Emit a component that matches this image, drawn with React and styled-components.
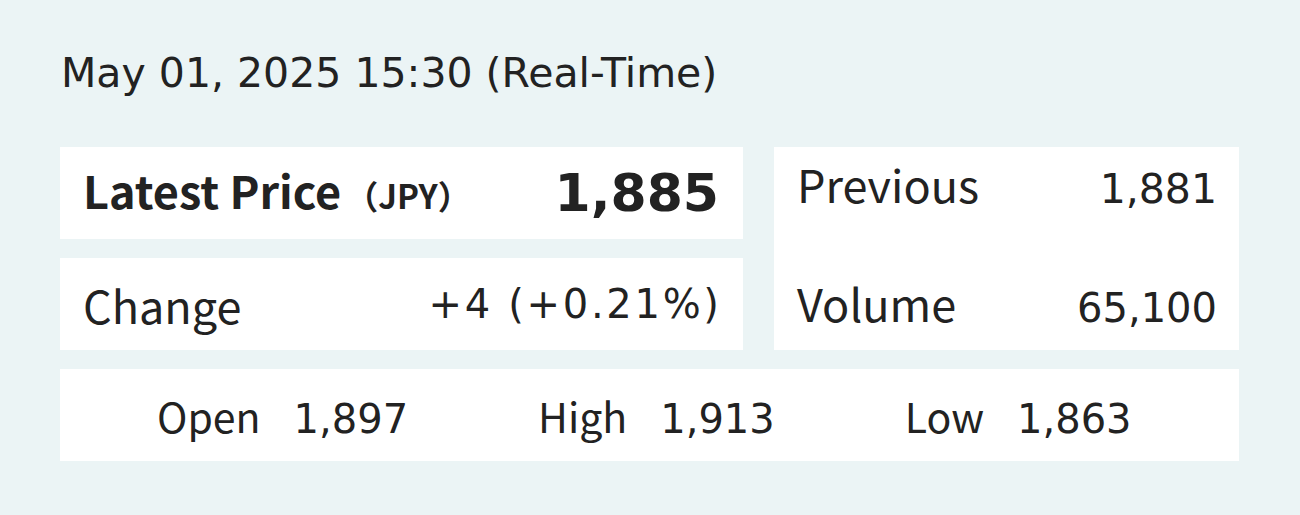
import styled, { createGlobalStyle } from "styled-components"

const GlobalStyle = createGlobalStyle`
  html, body {
    margin: 0;
    padding: 0;
    background: #ebf4f5;
  }
  body {
    font-family: "Noto Sans CJK JP", "Noto Sans", sans-serif;
    color: #222;
  }
`

const numFont = `"DejaVu Sans", Verdana, sans-serif`

const Page = styled.div`
  width: 1300px;
  height: 515px;
  box-sizing: border-box;
  padding: 45px 61px 0 60px;
  background: #ebf4f5;
`

const Stamp = styled.div`
  font-family: ${numFont};
  font-size: 41px;
  line-height: 56px;
  padding-left: 1px;
  margin-bottom: 46px;
`

const Grid = styled.div`
  display: grid;
  grid-template-columns: 683px 465px;
  grid-template-rows: 92px 92px 92px;
  column-gap: 31px;
  row-gap: 19px;
`

const Card = styled.div`
  background: #fff;
  display: flex;
  align-items: center;
  justify-content: space-between;
  padding: 0 24px 0 23px;
`

const Side = styled.div`
  background: #fff;
  grid-row: 1 / span 2;
  grid-column: 2;
  display: flex;
  flex-direction: column;
  gap: 70px;
  padding: 14px 22px 0 23px;
`

const SideRow = styled.div`
  display: flex;
  align-items: baseline;
  justify-content: space-between;
`

const Wide = styled.div`
  background: #fff;
  grid-column: 1 / span 2;
  display: flex;
  align-items: center;
  padding-left: 97px;
  gap: 130px;
`

const Label = styled.span`
  font-size: 45px;
  line-height: 1;
  font-weight: ${p => (p.bold ? 700 : 400)};
`

const Unit = styled.span`
  font-size: 33px;
  font-weight: 700;
  margin-left: 4px;
`

const Value = styled.span`
  font-family: ${numFont};
  font-size: ${p => p.size || 40}px;
  line-height: 1;
  font-weight: ${p => (p.bold ? 700 : 400)};
  letter-spacing: ${p => p.spread || 0}px;
  margin-right: ${p => -(p.spread || 0)}px;
`

const Pair = styled.div`
  display: flex;
  align-items: baseline;
  gap: 33px;
`

const PairLabel = styled.span`
  font-size: 41px;
`

const PairValue = styled.span`
  font-family: ${numFont};
  font-size: 40px;
`

function App() {
  return (
    <>
      <GlobalStyle />
      <Page>
        <Stamp>May 01, 2025 15:30 (Real-Time)</Stamp>
        <Grid>
          <Card>
            <span>
              <Label bold>Latest Price</Label>
              <Unit>（JPY）</Unit>
            </span>
            <Value size={52} bold>1,885</Value>
          </Card>
          <Side>
            <SideRow>
              <Label>Previous</Label>
              <Value size={41}>1,881</Value>
            </SideRow>
            <SideRow>
              <Label>Volume</Label>
              <Value>65,100</Value>
            </SideRow>
          </Side>
          <Card>
            <Label>Change</Label>
            <Value spread={2.7}>+4 (+0.21%)</Value>
          </Card>
          <Wide>
            <Pair><PairLabel>Open</PairLabel><PairValue>1,897</PairValue></Pair>
            <Pair><PairLabel>High</PairLabel><PairValue>1,913</PairValue></Pair>
            <Pair><PairLabel>Low</PairLabel><PairValue>1,863</PairValue></Pair>
          </Wide>
        </Grid>
      </Page>
    </>
  )
}

export default App
